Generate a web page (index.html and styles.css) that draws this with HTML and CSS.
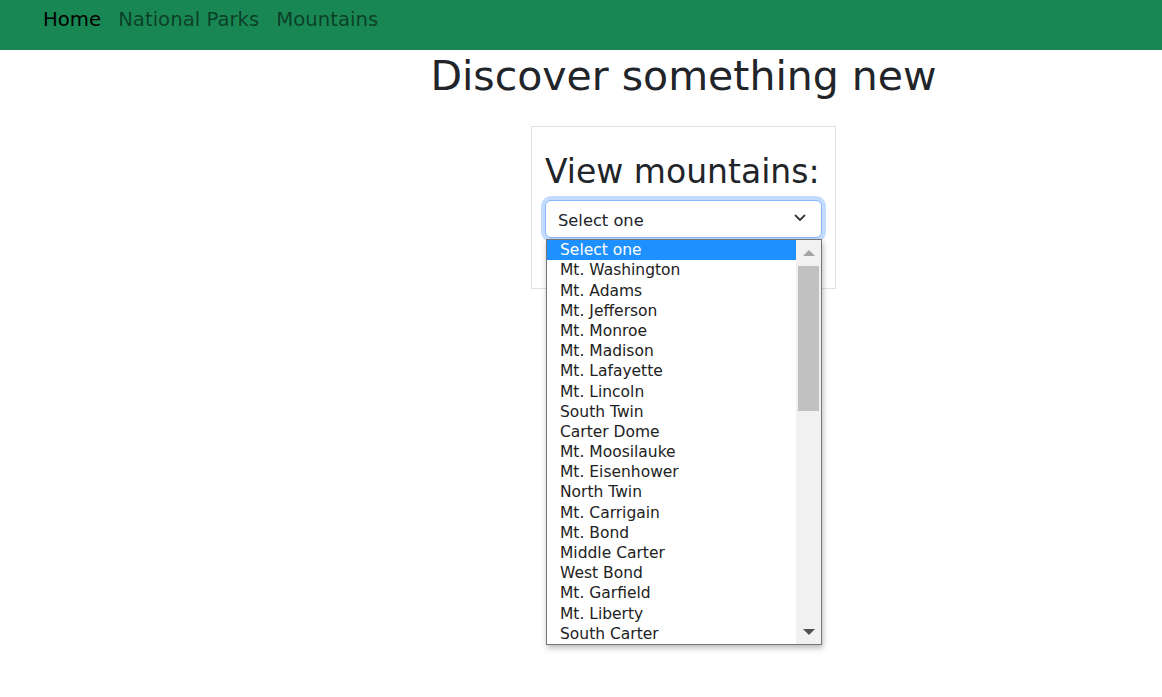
FILE: index.html
```html
<!DOCTYPE html>
<html lang="en">
<head>
<meta charset="utf-8">
<title>Discover something new</title>
<link rel="stylesheet" href="styles.css">
</head>
<body>
<nav class="navbar">
  <a class="nav-link active" href="#">Home</a>
  <a class="nav-link" href="#">National Parks</a>
  <a class="nav-link" href="#">Mountains</a>
</nav>
<main class="main">
  <h1 class="title">Discover something new</h1>
  <section class="card">
    <h2 class="card-title">View mountains:</h2>
    <div class="select-wrap">
      <div class="select">
        <span class="select-text">Select one</span>
        <svg class="chevron" width="12" height="8" viewBox="0 0 12 8"><path d="M1.5 1.5 L6 6 L10.5 1.5" fill="none" stroke="#343a40" stroke-width="1.8" stroke-linecap="round" stroke-linejoin="round"/></svg>
      </div>
      <div class="popup">
        <ul class="options">
          <li class="option selected">Select one</li>
          <li class="option">Mt. Washington</li>
          <li class="option">Mt. Adams</li>
          <li class="option">Mt. Jefferson</li>
          <li class="option">Mt. Monroe</li>
          <li class="option">Mt. Madison</li>
          <li class="option">Mt. Lafayette</li>
          <li class="option">Mt. Lincoln</li>
          <li class="option">South Twin</li>
          <li class="option">Carter Dome</li>
          <li class="option">Mt. Moosilauke</li>
          <li class="option">Mt. Eisenhower</li>
          <li class="option">North Twin</li>
          <li class="option">Mt. Carrigain</li>
          <li class="option">Mt. Bond</li>
          <li class="option">Middle Carter</li>
          <li class="option">West Bond</li>
          <li class="option">Mt. Garfield</li>
          <li class="option">Mt. Liberty</li>
          <li class="option">South Carter</li>
        </ul>
        <div class="scrollbar">
          <div class="sb-btn"><span class="tri-up"></span></div>
          <div class="sb-track"><div class="sb-thumb"></div></div>
          <div class="sb-btn sb-btn-down"><span class="tri-down"></span></div>
        </div>
      </div>
    </div>
  </section>
</main>
</body>
</html>
```
FILE: styles.css
```css
* { box-sizing: border-box; }

html, body {
  min-height: 100%;
}

body {
  margin: 0;
  min-height: 697px;
  font-family: "DejaVu Sans", Verdana, sans-serif;
  color: #212529;
  background: #fff;
}

.navbar {
  height: 50px;
  background: #198754;
  display: flex;
  align-items: flex-start;
  gap: 17px;
  padding: 6px 0 0 43px;
}

.nav-link {
  font-size: 19.7px;
  line-height: 28px;
  color: rgba(0, 0, 0, 0.55);
  text-decoration: none;
}

.nav-link.active {
  color: #000;
}

.main {
  margin-left: 205px;
  display: flex;
  flex-direction: column;
  align-items: center;
}

.title {
  margin: 0;
  padding-top: 2px;
  font-size: 41px;
  font-weight: 400;
  line-height: 1.2;
}

.card {
  margin-top: 25px;
  width: 305px;
  height: 163px;
  border: 1px solid #dee2e6;
  padding: 25px 13px 0;
}

.card-title {
  margin: 0 0 9px;
  font-size: 33px;
  font-weight: 400;
  line-height: 39px;
}

.select-wrap {
  position: relative;
}

.select {
  height: 38px;
  border: 1px solid #86b7fe;
  border-radius: 6px;
  box-shadow: 0 0 0 4px rgba(13, 110, 253, 0.25);
  display: flex;
  align-items: center;
  justify-content: space-between;
  padding: 2px 15px 0 12px;
  background: #fff;
}

.select-text {
  font-size: 16.3px;
  color: #212529;
}

.chevron {
  display: block;
  margin-top: -4px;
}

.popup {
  position: absolute;
  top: calc(100% + 1px);
  left: 1px;
  right: 0;
  height: 406px;
  border: 1px solid #767676;
  background: #fff;
  box-shadow: 1px 3px 6px rgba(0, 0, 0, 0.28);
  display: flex;
  z-index: 10;
}

.options {
  flex: 1;
  margin: 0;
  padding: 0;
  list-style: none;
  overflow: hidden;
}

.option {
  height: 20.2px;
  line-height: 20.2px;
  padding-left: 13px;
  font-size: 15.5px;
  color: #222;
  white-space: nowrap;
}

.option.selected {
  background: #1e90ff;
  color: #fff;
}

.scrollbar {
  width: 25px;
  background: #f1f1f1;
  display: flex;
  flex-direction: column;
}

.sb-btn {
  height: 26px;
  display: flex;
  align-items: center;
  justify-content: center;
}

.sb-btn-down {
  height: 24px;
}

.tri-up {
  width: 0;
  height: 0;
  border-left: 6px solid transparent;
  border-right: 6px solid transparent;
  border-bottom: 6px solid #a3a3a3;
}

.tri-down {
  width: 0;
  height: 0;
  border-left: 6px solid transparent;
  border-right: 6px solid transparent;
  border-top: 6px solid #505050;
}

.sb-track {
  flex: 1;
  padding: 0 2px;
}

.sb-thumb {
  height: 145px;
  background: #c1c1c1;
}
```
